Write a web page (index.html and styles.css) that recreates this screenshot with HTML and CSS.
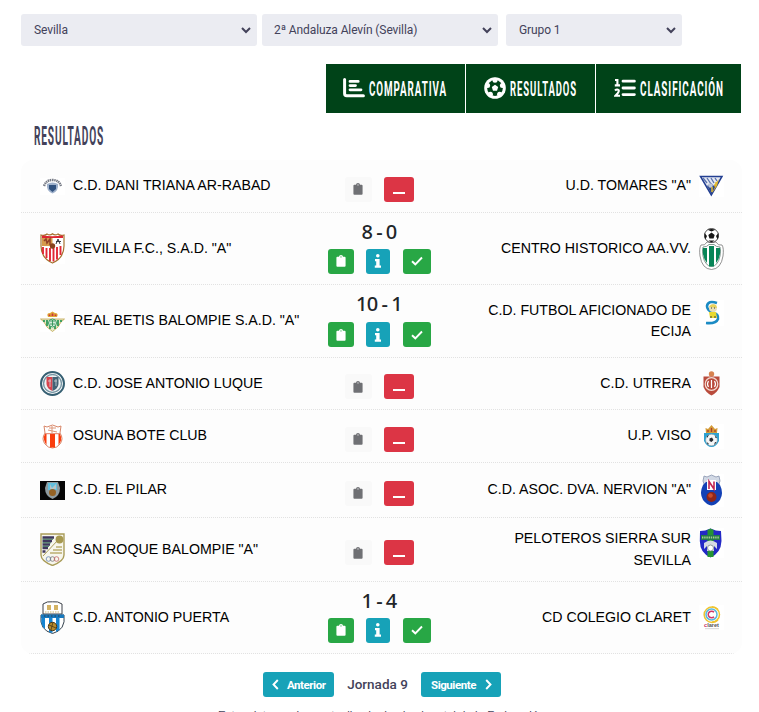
FILE: index.html
```html
<!DOCTYPE html>
<html lang="es">
<head>
    <meta charset="UTF-8">
    <meta name="viewport" content="width=device-width, initial-scale=1.0">
    <title>Resultados</title>
    <link rel="stylesheet" href="styles.css">
</head>
<body>
    <!-- iconos comunes -->
    <svg class="sprites" width="0" height="0">
        <symbol id="ico-clip" viewBox="0 0 12 14">
            <path fill="currentColor" fill-rule="evenodd" d="M1.6 2H3.6A2.4 2.2 0 0 1 8.4 2H10.4Q11.5 2 11.5 3.2V12.6Q11.5 13.8 10.4 13.8H1.6Q.5 13.8 .5 12.6V3.2Q.5 2 1.6 2ZM6 1.4A.7 .7 0 1 0 6 2.8A.7 .7 0 1 0 6 1.4Z"/>
        </symbol>
        <symbol id="ico-info" viewBox="0 0 8 14">
            <circle cx="3.8" cy="1.8" r="1.8" fill="currentColor"/>
            <path fill="currentColor" d="M1 5H5.6V11.6H7V13.8H.8V11.6H2.2V7.2H1Z"/>
        </symbol>
        <symbol id="ico-check" viewBox="0 0 12 10">
            <path fill="none" stroke="currentColor" stroke-width="1.9" d="M1 5.2L4.3 8.3L11 1.5"/>
        </symbol>
    </svg>

    <div class="filters">
        <select class="filter filter-wide"><option>Sevilla</option></select>
        <select class="filter filter-wide filter-cat"><option>2ª Andaluza Alevín (Sevilla)</option></select>
        <select class="filter filter-group"><option>Grupo 1</option></select>
    </div>

    <div class="tabs">
        <a class="tab tab-comp">
            <svg width="22" height="20" viewBox="0 0 22 20" fill="none" stroke="#fff" stroke-linecap="round">
                <path stroke-width="3" d="M1.6 1.5V15.5Q1.6 17.8 3.6 17.8H20.4"/>
                <path stroke-width="2.8" d="M7 3.4H15.2M7 7.6H12.5M7 11.8H18"/>
            </svg>
            <svg class="label" width="79" height="32"><text x="0" y="24" textLength="78" lengthAdjust="spacingAndGlyphs">COMPARATIVA</text></svg>
        </a>
        <a class="tab tab-res">
            <svg width="22" height="22" viewBox="0 0 22 22">
                <circle cx="11" cy="11" r="10.8" fill="#fff"/>
                <circle cx="11" cy="11" r="7.9" fill="#004318"/>
                <g fill="#fff">
                    <path d="M11 7.7L14.200 10L13 13.800H9L7.800 10Z"/>
                    <circle cx="11" cy="3.200" r="2.500"/>
                    <circle cx="18.400" cy="8.600" r="2.500"/>
                    <circle cx="15.600" cy="17.300" r="2.500"/>
                    <circle cx="6.400" cy="17.300" r="2.500"/>
                    <circle cx="3.600" cy="8.600" r="2.500"/>
                </g>
            </svg>
            <svg class="label" width="68" height="32"><text x="0" y="24" textLength="67" lengthAdjust="spacingAndGlyphs">RESULTADOS</text></svg>
        </a>
        <a class="tab tab-clas">
            <svg width="22" height="20" viewBox="0 0 22 20" fill="none" stroke="#fff" stroke-linecap="round">
                <path stroke-width="2.8" d="M9 3.200H20.400M9 10H20.400M9 16.600H20.400"/>
                <path stroke-width="2.1" stroke-linecap="butt" d="M1 2H3.400V7.400M.8 7.400H6M1 12.600Q3 10.600 4.700 12.200Q5.400 14 1.400 17.800H6"/>
            </svg>
            <svg class="label" width="85" height="32"><text x="0" y="24" textLength="84" lengthAdjust="spacingAndGlyphs">CLASIFICACIÓN</text></svg>
        </a>
    </div>

    <h2 class="title">
        <svg width="72" height="32"><text x="0" y="26" textLength="70" lengthAdjust="spacingAndGlyphs">RESULTADOS</text></svg>
    </h2>

    <div class="matches">
        <div class="match h53">
            <div class="team home">
                <svg class="crest" width="25" height="17" viewBox="0 0 25 17">
                    <rect width="25" height="17" fill="#fff"/>
                    <path d="M4 8Q6 2 12.500 2T21 8" fill="none" stroke="#777b86" stroke-width="2.4" stroke-dasharray="1.500 .6"/>
                    <path d="M7 6Q12.500 3 18 6Q19 13 12.500 15.500Q6 13 7 6Z" fill="#9fb1cb"/>
                    <path d="M9 7H16V11L12.500 14L9 11Z" fill="#31527f"/>
                </svg>
                <span>C.D. DANI TRIANA AR-RABAD</span>
            </div>
            <div class="score pending">
                <div class="actions"><a class="btn light"><svg width="10" height="12"><use href="#ico-clip"/></svg></a><a class="btn red"><i></i></a></div>
            </div>
            <div class="team away">
                <span>U.D. TOMARES "A"</span>
                <svg class="crest" width="25" height="22" viewBox="0 0 25 22">
                    <rect width="25" height="22" fill="#fff"/>
                    <path d="M1.500 1.500H23L12.300 20Z" fill="#e4e8f2" stroke="#233f91" stroke-width="1.500"/>
                    <path d="M4 3L8 8M8 3L12 9M12 3L15 8M16 3L18 6" stroke="#5871ad" stroke-width="1.300"/>
                    <path d="M15 10L20 4L18 11L13 18Z" fill="#d9b12e"/>
                    <path d="M8 11L12 8L16 12L12.300 19Z" fill="#2a468f"/>
                    <circle cx="11.500" cy="10.500" r="2.300" fill="#bcc5d8"/>
                    <path d="M13 12V17M17 7V10" stroke="#e4bf35" stroke-width="1.500"/>
                </svg>
            </div>
        </div>

        <div class="match h72">
            <div class="team home">
                <svg class="crest" width="25" height="31" viewBox="0 0 25 31">
                    <rect width="25" height="31" fill="#fff"/>
                    <path d="M1 2Q5 3 7 1Q10 3 12.500 .8Q15 3 18 1Q20 3 24 2V13Q24 25 12.500 30Q1 25 1 13Z" fill="#fff" stroke="#a5722f" stroke-width="1.200"/>
                    <path d="M2 2.500Q12 4 23 2.500V5H2Z" fill="#df2632"/>
                    <path d="M2 5H12.500V13H2Z" fill="#d59a4b"/>
                    <path d="M4 8L6 6L7 10L10 6V12" stroke="#923f27" stroke-width="1.500" fill="none"/>
                    <path d="M16 11L18 6L20 11M16 8.500H21" stroke="#373a42" fill="none"/>
                    <path d="M3 14V21M6.500 15V25M10 15V28M13.500 15V28.500M17 14V26.500M20.500 13V22" stroke="#e12835" stroke-width="1.900"/>
                    <circle cx="12.500" cy="13" r="2.700" fill="#87421d"/>
                </svg>
                <span>SEVILLA F.C., S.A.D. "A"</span>
            </div>
            <div class="score">
                <strong>8 - 0</strong>
                <div class="actions"><a class="btn green"><svg width="10" height="12"><use href="#ico-clip"/></svg></a><a class="btn blue"><svg width="8" height="14"><use href="#ico-info"/></svg></a><a class="btn green ok"><svg width="12" height="10"><use href="#ico-check"/></svg></a></div>
            </div>
            <div class="team away">
                <span>CENTRO HISTORICO AA.VV.</span>
                <svg class="crest" width="25" height="42" viewBox="0 0 25 42">
                    <path d="M2 17Q6 18 8 14H17Q19 18 23 17Q25 20 24 28Q22 41 12.500 41.500Q3 41 1 28Q0 20 2 17Z" fill="#fff" stroke="#777" stroke-width=".8"/>
                    <path d="M4 19Q8 19 10 16.500H15Q17 19 21 19Q22 23 21 28Q19 38 12.500 38.500Q6 38 4 28Q3 23 4 19Z" fill="#fff" stroke="#4d6e63" stroke-width=".7"/>
                    <path d="M4 20H8V35Q3 29 4 20ZM10 18H15V38.500H10ZM17 20H21Q22 29 17 35Z" fill="#078557"/>
                    <circle cx="12.500" cy="7.500" r="7" fill="#fff" stroke="#222" stroke-width=".8"/>
                    <path d="M9.300 7L12.500 4.500L15.700 7L14.500 10.500H10.500ZM8.500 1.800Q12.500 0 16.500 1.800L12.500 3.400ZM5.600 5L8 8L6.500 11.500Q5 9 5.600 5ZM19.400 5L17 8L18.500 11.500Q20 9 19.400 5ZM9.500 12.500H15.500L12.500 14.500Z" fill="#171717"/>
                </svg>
            </div>
        </div>

        <div class="match h73">
            <div class="team home">
                <svg class="crest" width="25" height="21" viewBox="0 0 25 21">
                    <rect width="25" height="21" fill="#fff"/>
                    <path d="M.5 8H24.500L21 11L18 16L12.500 20.500L7 16L4 11Z" fill="#e4e9c9" stroke="#c1a54b" stroke-width=".8"/>
                    <path d="M4 9V11M7 9V15M10 15V18M15 15V18M18 9V15M21 9V11" stroke="#279655" stroke-width="1.700"/>
                    <circle cx="12.500" cy="12" r="4" fill="#d7ebdc" stroke="#3a9c62"/>
                    <path d="M10 10H15M10 13H15M12.500 9V15" stroke="#258c4d" stroke-width=".8"/>
                    <path d="M8 6Q6 2 10 2L12.500 .5L15 2Q19 2 17 6Z" fill="#e0aa36"/>
                    <path d="M9.500 5V3.500M12.500 5V2.500M15.500 5V3.500" stroke="#ca3240" stroke-width="1.700"/>
                </svg>
                <span>REAL BETIS BALOMPIE S.A.D. "A"</span>
            </div>
            <div class="score">
                <strong>10 - 1</strong>
                <div class="actions"><a class="btn green"><svg width="10" height="12"><use href="#ico-clip"/></svg></a><a class="btn blue"><svg width="8" height="14"><use href="#ico-info"/></svg></a><a class="btn green ok"><svg width="12" height="10"><use href="#ico-check"/></svg></a></div>
            </div>
            <div class="team away">
                <span>C.D. FUTBOL AFICIONADO DE<br>ECIJA</span>
                <svg class="crest crest-up" width="25" height="26" viewBox="0 0 25 26">
                    <rect width="25" height="26" fill="#fff"/>
                    <path d="M18 3Q9 0 8 6Q8 10 13 12Q20 14 19 19Q17 24 7 23" fill="none" stroke="#1b8bc4" stroke-width="2.600"/>
                    <circle cx="14" cy="8" r="4" fill="#e9dfba"/>
                    <path d="M10 7Q12 3 17 5L18 8Z" fill="#e7d35b"/>
                    <path d="M10 12H17L18 18H11Z" fill="#e9d92f"/>
                    <path d="M12 8H13M15 8H16M12 16V18M16 16V18" stroke="#343d46"/>
                </svg>
            </div>
        </div>

        <div class="match h52">
            <div class="team home">
                <svg class="crest" width="25" height="25" viewBox="0 0 25 25">
                    <circle cx="12.500" cy="12.500" r="11.500" fill="#fff" stroke="#355f72" stroke-width="2"/>
                    <circle cx="12.500" cy="12.500" r="9" fill="#eef2f3" stroke="#7796a4" stroke-width="1.400"/>
                    <path d="M6.500 6H12.500V20Q7 18 6.500 13Z" fill="#d7434d"/>
                    <path d="M12.500 6H18.500V13Q18 18 12.500 20Z" fill="#426275"/>
                    <path d="M8 10H11M10 8V16M14 10H17M16 8V15" stroke="#d4dadd" stroke-width=".8"/>
                </svg>
                <span>C.D. JOSE ANTONIO LUQUE</span>
            </div>
            <div class="score pending">
                <div class="actions"><a class="btn light"><svg width="10" height="12"><use href="#ico-clip"/></svg></a><a class="btn red"><i></i></a></div>
            </div>
            <div class="team away">
                <span>C.D. UTRERA</span>
                <svg class="crest" width="25" height="25" viewBox="0 0 25 25">
                    <circle cx="12.500" cy="3" r="2.700" fill="#d7824f"/>
                    <path d="M4.500 5.500H20.500V16Q18 22 12.500 24.500Q7 22 4.500 16Z" fill="#b94b3c"/>
                    <circle cx="12.500" cy="13" r="6.300" fill="#b94b3c" stroke="#f2dcd2" stroke-width="1.200"/>
                    <path d="M9.500 10Q7.500 13 9.500 16M12.500 9V17M15.500 10Q17.500 13 15.500 16" fill="none" stroke="#fff" stroke-width="1.200"/>
                </svg>
            </div>
        </div>

        <div class="match h53">
            <div class="team home">
                <svg class="crest" width="25" height="25" viewBox="0 0 25 25">
                    <rect width="25" height="25" fill="#fff"/>
                    <path d="M4 2L7 3L12.500 1L18 3L21 2L20 9Q24 15 20 20Q17 24 12.500 24Q8 24 5 20Q1 15 5 9Z" fill="#fff" stroke="#d88668"/>
                    <path d="M9 4H16M8 6L17 8M12 2V9" stroke="#dc9578"/>
                    <path d="M10 10H15V23.500H10ZM5 10H6.500V21Q2 15 5 10ZM18.500 10H20Q23 16 18.500 21Z" fill="#fa3d0d"/>
                    <path d="M5 9.700H20" stroke="#d85c3c" stroke-width=".8"/>
                </svg>
                <span>OSUNA BOTE CLUB</span>
            </div>
            <div class="score pending">
                <div class="actions"><a class="btn light"><svg width="10" height="12"><use href="#ico-clip"/></svg></a><a class="btn red"><i></i></a></div>
            </div>
            <div class="team away">
                <span>U.P. VISO</span>
                <svg class="crest" width="25" height="25" viewBox="0 0 25 25">
                    <rect width="25" height="25" fill="#fff"/>
                    <path d="M7 9L6.500 4L9 5L12.500 1L16 5L18.500 4L18 9Z" fill="#d49b38"/>
                    <path d="M9 8V6M12.500 8V4M16 8V6" stroke="#a83c30" stroke-width="1.300"/>
                    <path d="M5 9H20V17Q17 23 12.500 23Q8 23 5 17Z" fill="#2ca1d1"/>
                    <circle cx="12.500" cy="16" r="5.800" fill="#f5f6f6" stroke="#9aa2a8" stroke-width=".6"/>
                    <path d="M10.500 14.500L13 13.500L14.500 16L12.500 18L10.500 17ZM8 18L10 20L8.500 20.500ZM16 18L17.500 18.500L15 21ZM8 12L10 11L8 14ZM16 11.500L18 14L16.500 14Z" fill="#242a33"/>
                </svg>
            </div>
        </div>

        <div class="match h55">
            <div class="team home">
                <svg class="crest" width="25" height="19" viewBox="0 0 25 19">
                    <rect width="25" height="19" fill="#060606"/>
                    <path d="M7 1H18L20 7Q20 15 12.500 18Q5 15 5 7Z" fill="#8f9ba0"/>
                    <path d="M8 2H17V9H8Z" fill="#62bfdd"/>
                    <path d="M10 3L12 7L16 3V8H10Z" fill="#b6c4c7"/>
                    <circle cx="12.500" cy="11.500" r="3.500" fill="#946224"/>
                </svg>
                <span>C.D. EL PILAR</span>
            </div>
            <div class="score pending">
                <div class="actions"><a class="btn light"><svg width="10" height="12"><use href="#ico-clip"/></svg></a><a class="btn red"><i></i></a></div>
            </div>
            <div class="team away">
                <span>C.D. ASOC. DVA. NERVION "A"</span>
                <svg class="crest" width="25" height="33" viewBox="0 0 25 33">
                    <rect width="25" height="33" fill="#fff"/>
                    <path d="M5 2L8 3L12.500 1L17 3L20 2L21 7L19 13H6L4 7Z" fill="#d2d9e5" stroke="#8693ad" stroke-width=".8"/>
                    <path d="M4 11L7 8H18L21 11Q25 19 21 26Q17 31 12.500 31.500Q8 31 4 26Q0 19 4 11Z" fill="#1341b6"/>
                    <path d="M8 6H17V16H8Z" fill="#fff"/>
                    <path d="M10 15V7.500L15 15V7.500" fill="none" stroke="#c12654" stroke-width="1.600"/>
                    <circle cx="12.500" cy="23" r="5" fill="#8f2619"/>
                    <circle cx="11.500" cy="21.500" r="2.300" fill="#c64b2c"/>
                </svg>
            </div>
        </div>

        <div class="match h64">
            <div class="team home">
                <svg class="crest" width="25" height="33" viewBox="0 0 25 33">
                    <path d="M1 1H24V22Q24 28 12.500 32.500Q1 28 1 22Z" fill="#f7f6ed" stroke="#a99c59" stroke-width="1.400"/>
                    <path d="M2.500 4.500H14M2.500 8H12M2.500 11.500H10M2.500 15H8M2.500 18.500H5.500" stroke="#3f365e" stroke-width="2.300"/>
                    <path d="M2.500 6.200H13M2.500 9.800H11M2.500 13.300H9" stroke="#316952" stroke-width="1"/>
                    <path d="M3 23L18 7" stroke="#a99c59"/>
                    <circle cx="19.500" cy="6.500" r="3.900" fill="#a79950"/>
                    <path d="M16 14H22M13 17H22M10 20H22" stroke="#bcae70" stroke-width="1.300"/>
                    <g fill="none" stroke-width=".8"><circle cx="8.500" cy="26" r="2.300" stroke="#6888b8"/><circle cx="12.500" cy="26" r="2.300" stroke="#777"/><circle cx="16.500" cy="26" r="2.300" stroke="#c46666"/></g>
                </svg>
                <span>SAN ROQUE BALOMPIE "A"</span>
            </div>
            <div class="score pending">
                <div class="actions"><a class="btn light"><svg width="10" height="12"><use href="#ico-clip"/></svg></a><a class="btn red"><i></i></a></div>
            </div>
            <div class="team away">
                <span>PELOTEROS SIERRA SUR<br>SEVILLA</span>
                <svg class="crest crest-low" width="25" height="30" viewBox="0 0 25 30">
                    <rect width="25" height="30" fill="#fff"/>
                    <path d="M1 3Q6 3 11.500 .5Q17 3 22 3L22.500 13Q22 25 11.500 29.500Q1 25 .8 13Z" fill="#2329c6"/>
                    <path d="M8.500 2L11.500 .5L14.500 2V29H8.500Z" fill="#259533"/>
                    <path d="M2 7H21V12H2Z" fill="#247a49"/>
                    <path d="M3 9.500H20" stroke="#a6cf90" stroke-width="2" stroke-dasharray="1.400 .8"/>
                    <path d="M5 15Q11.500 10 18 15V21L15 18V23H8V18L5 21Z" fill="#d5dae4"/>
                    <circle cx="11.500" cy="20" r="3" fill="#fff" stroke="#788" stroke-width=".8"/>
                </svg>
            </div>
        </div>

        <div class="match h72">
            <div class="team home">
                <svg class="crest" width="25" height="33" viewBox="0 0 25 33">
                    <path d="M3 3Q7 0 12.500 .8Q18 0 22 3V13H3Z" fill="#fff" stroke="#3c4149"/>
                    <path d="M7 9V4H11V9ZM14 9V4H18V9Z" fill="#d3b263"/>
                    <path d="M5 11H20" stroke="#c9b16e" stroke-dasharray="1.500 1"/>
                    <path d="M1 14H24Q26 29 12.500 32.500Q-1 29 1 14Z" fill="#fff" stroke="#33414d"/>
                    <path d="M1.500 17H5V28Q0 24 1.500 17ZM9 17H12.500V32L9 31ZM16 17H19.500V29L16 31Z" fill="#1784d1"/>
                    <path d="M1 13.500H24V17H1Z" fill="#1878bd"/>
                    <path d="M4 15H21" stroke="#283a51" stroke-dasharray="1.500 2"/>
                    <circle cx="12.500" cy="25.500" r="4.200" fill="#b68b2c" stroke="#4b391b"/>
                    <path d="M9 24L16 27M13 21L11 29" stroke="#4b391b" stroke-width=".8"/>
                </svg>
                <span>C.D. ANTONIO PUERTA</span>
            </div>
            <div class="score">
                <strong>1 - 4</strong>
                <div class="actions"><a class="btn green"><svg width="10" height="12"><use href="#ico-clip"/></svg></a><a class="btn blue"><svg width="8" height="14"><use href="#ico-info"/></svg></a><a class="btn green ok"><svg width="12" height="10"><use href="#ico-check"/></svg></a></div>
            </div>
            <div class="team away">
                <span>CD COLEGIO CLARET</span>
                <svg class="crest" width="25" height="25" viewBox="0 0 25 25">
                    <rect width="25" height="25" fill="#fff"/>
                    <g fill="none" stroke-width="1.500">
                        <path d="M19 4.500A8 7.700 0 1 0 19 15" stroke="#efc42f"/>
                        <path d="M13 2A7.500 7.500 0 0 1 13 17" stroke="#efc42f"/>
                        <circle cx="12.500" cy="9.500" r="5.500" stroke="#58b9dd"/>
                        <path d="M15 7.300A3.300 3.300 0 1 0 15 11.700" stroke="#cf3768"/>
                    </g>
                    <text x="5" y="22" class="claret" textLength="15" lengthAdjust="spacingAndGlyphs"><tspan fill="#c83762">c</tspan>laret</text>
                    <path d="M6 23.700H20" stroke="#c9c9c9" stroke-width=".8"/>
                </svg>
            </div>
        </div>
    </div>

    <div class="pager">
        <a class="page-btn prev"><svg width="7" height="11" viewBox="0 0 7 11"><path d="M5.800 1L1.500 5.500L5.800 10"/></svg>Anterior</a>
        <span class="round">Jornada 9</span>
        <a class="page-btn next">Siguiente<svg width="7" height="11" viewBox="0 0 7 11"><path d="M1.200 1L5.500 5.500L1.200 10"/></svg></a>
    </div>
    <p class="note">Estos datos se han actualizado desde el portal de la Federación</p>
</body>
</html>
```
FILE: styles.css
```css
body {
    width: 721px;
    height: 712px;
    margin: 0 0 0 21px;
    background: #fff;
    font-family: "Liberation Sans", Arial, sans-serif;
    color: #43425a;
    overflow: hidden;
}

.sprites {
    display: block;
}

.filters {
    display: flex;
    gap: 5px;
    padding-top: 14px;
}

.filter {
    height: 32px;
    padding: 0 8px 0 9px;
    border: 0;
    border-right: 3px solid transparent;
    border-radius: 3px;
    background-color: #ebecf2;
    color: #43425a;
    font-family: Roboto, sans-serif;
    font-size: 12px;
    letter-spacing: -0.1px;
}

.filter-wide {
    width: 236px;
}

.filter-cat {
    padding-left: 8px;
}

.filter-group {
    width: 176px;
    margin-left: 3px;
}

.tabs {
    display: flex;
    justify-content: flex-end;
    margin-top: 18px;
}

.tab {
    display: flex;
    align-items: center;
    gap: 4px;
    height: 49px;
    box-sizing: border-box;
    padding-bottom: 2px;
    border-right: 1px solid #fff;
    background: #004318;
}

.tab-comp {
    width: 140px;
    padding-left: 17px;
}

.tab-res {
    width: 130px;
    padding-left: 18px;
}

.tab-clas {
    width: 146px;
    padding-left: 18px;
}

.label,
.title svg {
    overflow: visible;
}

.label text {
    fill: #fff;
    font-family: Roboto, sans-serif;
    font-size: 21px;
    font-weight: 700;
    letter-spacing: 2px;
}

.title {
    height: 28px;
    margin: 6px 0 13px 13px;
}

.title svg {
    display: block;
}

.title text {
    fill: #43425a;
    font-family: Roboto, sans-serif;
    font-size: 25px;
    font-weight: 700;
    letter-spacing: 2px;
}

.matches {
    border-radius: 12px;
    background: #fdfdfd;
    overflow: hidden;
}

.match {
    display: grid;
    grid-template-columns: 300px 116px 1fr;
    box-sizing: border-box;
    border-bottom: 1px dotted #e2e2e2;
}

.h52 { height: 52px; }
.h53 { height: 53px; }
.h55 { height: 55px; }
.h64 { height: 64px; }
.h72 { height: 72px; }
.h73 { height: 73px; }

.team {
    display: flex;
    align-items: center;
    gap: 8px;
    color: #000;
    font-size: 14.2px;
    line-height: 21.4px;
    white-space: nowrap;
}

.home {
    padding-left: 19px;
}

.away {
    justify-content: flex-end;
    padding-right: 18px;
    text-align: right;
}

.crest {
    flex: none;
}

.crest-up {
    margin-bottom: 17px;
}

.crest-low {
    margin-bottom: 13px;
}

.score {
    display: flex;
    flex-direction: column;
    align-items: center;
    justify-content: center;
    gap: 5px;
    padding-bottom: 5px;
}

.h73 .score {
    gap: 6px;
    padding-bottom: 4px;
}

.score strong {
    color: #212529;
    font-family: "Noto Sans", sans-serif;
    font-size: 20px;
    font-weight: 500;
    line-height: 25px;
    letter-spacing: -0.7px;
    word-spacing: -0.5px;
}

.score.pending {
    padding: 6px 0 0;
}

.actions {
    display: flex;
    gap: 12.5px;
}

.pending .actions {
    gap: 12px;
}

.btn {
    display: flex;
    align-items: center;
    justify-content: center;
    width: 26px;
    height: 25px;
    border-radius: 3px;
    color: #fff;
}

.green {
    background: #28a745;
}

.ok {
    width: 28px;
}

.blue {
    width: 24px;
    background: #17a2b8;
}

.light {
    width: 27px;
    background: #f9f9f9;
    color: #6f7074;
}

.red {
    width: 30px;
    background: #dc3545;
}

.red i {
    width: 12px;
    height: 2px;
    margin-top: 7px;
    background: #fff;
}

.pager {
    display: flex;
    align-items: center;
    margin: 18px 0 0 242px;
}

.page-btn {
    display: flex;
    align-items: center;
    height: 25px;
    border-radius: 3px;
    background: #17a2b8;
    color: #fff;
    font-family: Roboto, sans-serif;
    font-size: 11.5px;
    font-weight: 700;
    letter-spacing: -0.45px;
}

.page-btn path {
    fill: none;
    stroke: #fff;
    stroke-width: 1.9;
}

.prev {
    width: 62px;
    padding-left: 9px;
    gap: 8px;
}

.next {
    width: 70px;
    padding-left: 10px;
    gap: 9px;
}

.round {
    width: 87px;
    padding-bottom: 2px;
    text-align: center;
    font-family: Roboto, sans-serif;
    font-size: 13.5px;
    font-weight: 500;
}

.note {
    margin: 10px 0 0 197px;
    font-size: 11.5px;
    line-height: 16px;
    white-space: nowrap;
}

.claret {
    font-family: "Liberation Sans", sans-serif;
    font-size: 6px;
    font-weight: 700;
    fill: #555;
}
```
